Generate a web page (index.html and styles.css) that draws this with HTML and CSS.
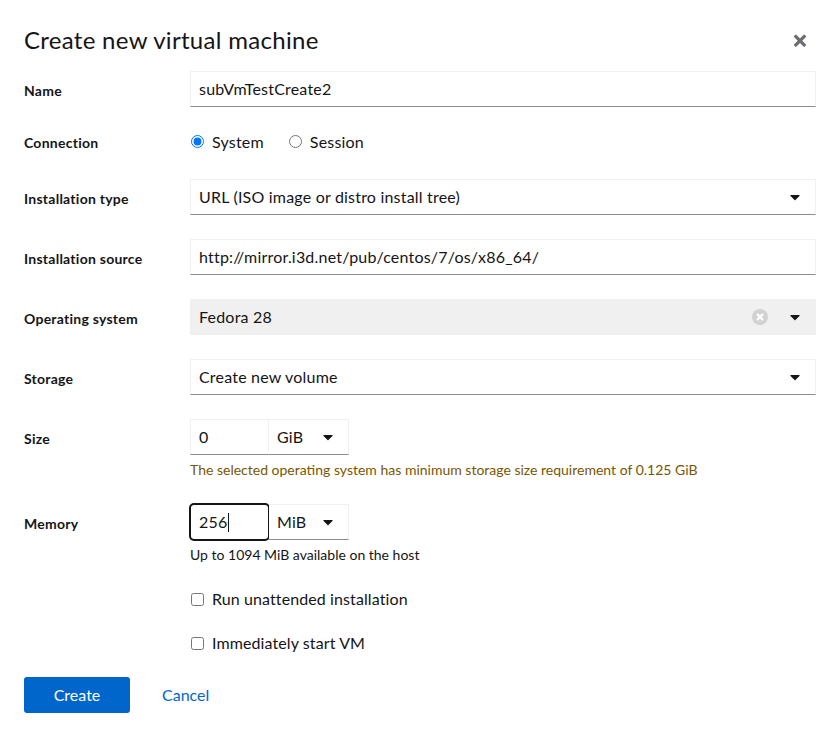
FILE: index.html
```html
<!DOCTYPE html>
<html lang="en">
<head>
<meta charset="utf-8">
<title>Create new virtual machine</title>
<link rel="stylesheet" href="styles.css">
</head>
<body>
<div class="modal" role="dialog" aria-labelledby="title">
  <header class="modal-header">
    <h1 class="modal-title" id="title">Create new virtual machine</h1>
    <button class="close-btn" aria-label="Close">
      <svg class="close-icon" viewBox="0 0 352 512" width="12" height="17.5" aria-hidden="true"><path d="M242.72 256l100.07-100.07c12.28-12.28 12.28-32.19 0-44.48l-22.24-22.24c-12.28-12.28-32.19-12.28-44.48 0L176 189.280 75.930 89.210c-12.28-12.28-32.19-12.28-44.48 0L9.21 111.45c-12.28 12.28-12.28 32.19 0 44.48L109.28 256 9.21 356.07c-12.28 12.28-12.28 32.19 0 44.48l22.24 22.24c12.28 12.28 32.2 12.28 44.48 0L176 322.72l100.07 100.07c12.28 12.28 32.2 12.28 44.48 0l22.24-22.24c12.28-12.28 12.28-32.19 0-44.48L242.72 256z"/></svg>
    </button>
  </header>

  <form class="form">
    <label class="form-label">Name</label>
    <div class="control">
      <div class="text-input">subVmTestCreate2</div>
    </div>

    <label class="form-label no-pad">Connection</label>
    <div class="control radios">
      <label class="radio"><input type="radio" name="conn" checked> System</label>
      <label class="radio"><input type="radio" name="conn"> Session</label>
    </div>

    <label class="form-label">Installation type</label>
    <div class="control">
      <div class="text-input select">
        <span class="select-text">URL (ISO image or distro install tree)</span>
        <svg class="caret" viewBox="0 0 320 512" width="10" height="16" aria-hidden="true"><path d="M31.3 192h257.3c17.8 0 26.7 21.5 14.1 34.1L174.1 354.8c-7.8 7.8-20.5 7.8-28.3 0L17.2 226.1C4.6 213.5 13.5 192 31.3 192z"/></svg>
      </div>
    </div>

    <label class="form-label">Installation source</label>
    <div class="control">
      <div class="text-input">http://mirror.i3d.net/pub/centos/7/os/x86_64/</div>
    </div>

    <label class="form-label">Operating system</label>
    <div class="control">
      <div class="text-input select disabled">
        <span class="select-text">Fedora 28</span>
        <svg class="clear" viewBox="0 0 16 16" width="16" height="16" aria-hidden="true"><circle cx="8" cy="8" r="8" fill="#d2d2d2"/><path d="M5.6 5.6l4.8 4.8M10.4 5.6l-4.8 4.8" stroke="#fff" stroke-width="2.2" stroke-linecap="round"/></svg>
        <svg class="caret" viewBox="0 0 320 512" width="10" height="16" aria-hidden="true"><path d="M31.3 192h257.3c17.8 0 26.7 21.5 14.1 34.1L174.1 354.8c-7.8 7.8-20.5 7.8-28.3 0L17.2 226.1C4.6 213.5 13.5 192 31.3 192z"/></svg>
      </div>
    </div>

    <label class="form-label">Storage</label>
    <div class="control">
      <div class="text-input select">
        <span class="select-text">Create new volume</span>
        <svg class="caret" viewBox="0 0 320 512" width="10" height="16" aria-hidden="true"><path d="M31.3 192h257.3c17.8 0 26.7 21.5 14.1 34.1L174.1 354.8c-7.8 7.8-20.5 7.8-28.3 0L17.2 226.1C4.6 213.5 13.5 192 31.3 192z"/></svg>
      </div>
    </div>

    <label class="form-label">Size</label>
    <div class="control">
      <div class="size-group">
        <div class="text-input num">0</div>
        <div class="text-input select unit">
          <span class="select-text">GiB</span>
          <svg class="caret" viewBox="0 0 320 512" width="10" height="16" aria-hidden="true"><path d="M31.3 192h257.3c17.8 0 26.7 21.5 14.1 34.1L174.1 354.8c-7.8 7.8-20.5 7.8-28.3 0L17.2 226.1C4.6 213.5 13.5 192 31.3 192z"/></svg>
        </div>
      </div>
      <div class="helper warning">The selected operating system has minimum storage size requirement of 0.125 GiB</div>
    </div>

    <label class="form-label">Memory</label>
    <div class="control">
      <div class="size-group">
        <div class="text-input num focused">256<span class="text-caret"></span></div>
        <div class="text-input select unit">
          <span class="select-text">MiB</span>
          <svg class="caret" viewBox="0 0 320 512" width="10" height="16" aria-hidden="true"><path d="M31.3 192h257.3c17.8 0 26.7 21.5 14.1 34.1L174.1 354.8c-7.8 7.8-20.5 7.8-28.3 0L17.2 226.1C4.6 213.5 13.5 192 31.3 192z"/></svg>
        </div>
      </div>
      <div class="helper">Up to 1094 MiB available on the host</div>
    </div>

    <div class="spacer"></div>
    <div class="control">
      <label class="check"><input type="checkbox"> Run unattended installation</label>
    </div>

    <div class="spacer"></div>
    <div class="control">
      <label class="check"><input type="checkbox"> Immediately start VM</label>
    </div>
  </form>

  <footer class="modal-footer">
    <button class="btn btn-primary" type="button">Create</button>
    <button class="btn btn-link" type="button">Cancel</button>
  </footer>
</div>
</body>
</html>
```

FILE: styles.css
```css
html, body {
  margin: 0;
  padding: 0;
  background: #fff;
}

body {
  font-family: Lato, "Liberation Sans", sans-serif;
  color: #151515;
  font-size: 16px;
}

.modal {
  padding: 24px 24px 24px 24px;
}

.modal-header {
  display: flex;
  justify-content: space-between;
  align-items: center;
}

.modal-title {
  margin: 0;
  font-size: 24px;
  line-height: 31px;
  font-weight: 400;
  letter-spacing: 0.3px;
  color: #151515;
}

.close-btn {
  border: 0;
  background: none;
  padding: 0;
  margin: 3px 10px 0 0;
  display: flex;
  cursor: pointer;
}

.close-icon {
  fill: #6a6e73;
}

.form {
  margin: 16px 0 0 0;
  display: grid;
  grid-template-columns: 166px 1fr;
  row-gap: 24px;
}

.form-label {
  font-size: 14px;
  font-weight: 700;
  line-height: 21px;
  letter-spacing: 0.25px;
  padding-top: 9px;
}

.form-label.no-pad {
  padding-top: 1px;
}

.control {
  min-width: 0;
}

.text-input {
  box-sizing: border-box;
  height: 36px;
  border: 1px solid #f0f0f0;
  border-bottom-color: #8a8d90;
  padding: 0 8px;
  display: flex;
  align-items: center;
  font-size: 16px;
  line-height: 24px;
  letter-spacing: 0.2px;
  color: #151515;
  background: #fff;
  white-space: nowrap;
}

.select {
  padding-right: 15px;
}

.select-text {
  flex: 1;
}

.caret {
  fill: #151515;
  flex: none;
}

.clear {
  flex: none;
  margin-right: 22px;
}

.disabled {
  background: #f0f0f0;
  border-color: #f0f0f0;
}

.radios {
  display: flex;
  align-items: flex-start;
  height: 24px;
  line-height: 21px;
}

.radio {
  display: inline-flex;
  align-items: center;
  margin-right: 24px;
  font-size: 16px;
  letter-spacing: 0.2px;
}

.radio input {
  width: 13px;
  height: 13px;
  margin: 0 8px 0 1px;
}

.size-group {
  display: flex;
}

.num {
  width: 79px;
}

.unit {
  width: 80px;
  border-left: none;
}

.focused {
  outline: 2px solid #151515;
  outline-offset: -1px;
  border-radius: 4px;
}

.text-caret {
  display: inline-block;
  width: 1px;
  height: 19px;
  background: #151515;
  margin-left: 1px;
}

.helper {
  margin-top: 4px;
  font-size: 14px;
  line-height: 21px;
}

.helper.warning {
  color: #795600;
}

.check {
  display: flex;
  align-items: center;
  height: 20px;
  font-size: 16px;
  line-height: 20px;
  letter-spacing: 0.1px;
}

.check input {
  width: 13px;
  height: 13px;
  margin: 0 8px 0 1px;
}

.modal-footer {
  display: flex;
  align-items: center;
  padding-top: 24px;
}

.btn {
  font-family: inherit;
  font-size: 16px;
  line-height: 24px;
  height: 36px;
  border: 0;
  border-radius: 3px;
  cursor: pointer;
}

.btn-primary {
  background: #0066cc;
  color: #fff;
  min-width: 106px;
  padding: 0 16px;
}

.btn-link {
  background: none;
  color: #0066cc;
  padding: 0 16px;
  margin-left: 16px;
}
```
